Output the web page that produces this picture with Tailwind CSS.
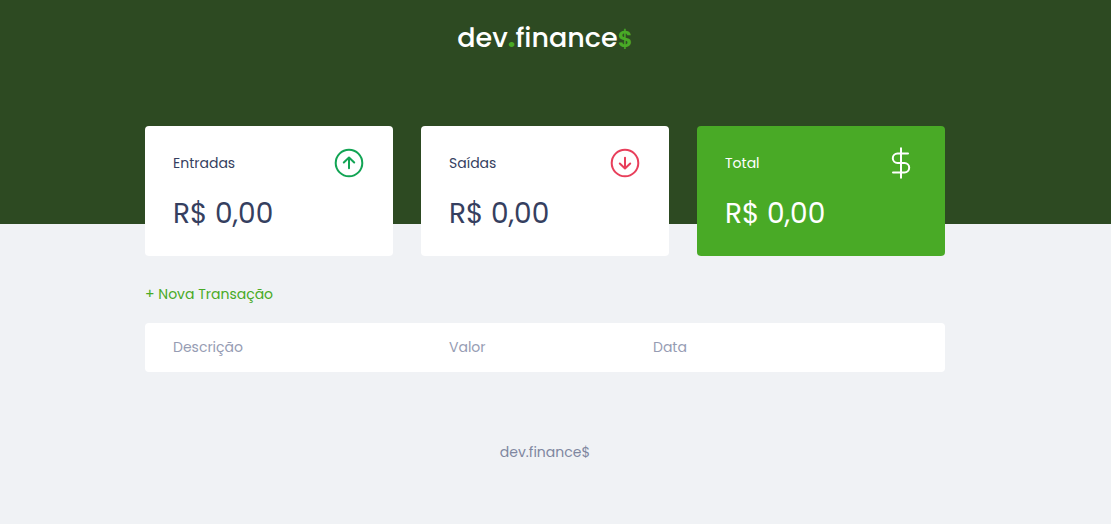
<!DOCTYPE html>
<html lang="pt-BR">
<head>
<meta charset="utf-8">
<meta name="viewport" content="width=device-width, initial-scale=1">
<title>dev.finance$</title>
<script src="https://cdn.jsdelivr.net/npm/@tailwindcss/browser@4"></script>
</head>
<body class="min-h-screen bg-[#f0f2f5] font-[Poppins,Inter,sans-serif] text-sm">
<header class="h-56 bg-[#2d4a22] pt-4 pr-[21px] text-center">
  <h1 class="text-[27px] leading-[44px] font-medium text-white">dev<span class="font-bold text-[#49aa26]">.</span>finance<span class="text-[23px] font-semibold text-[#49aa26]">$</span></h1>
</header>
<main class="pr-[21px]">
  <div class="mx-auto w-[90vw] max-w-[800px]">
    <section class="-mt-[98px] grid grid-cols-3 gap-7" aria-label="Balanço">
      <div class="rounded bg-white px-7 pt-[21px] pb-5 text-[#363f5f]">
        <h2 class="flex h-8 items-center justify-between">Entradas
          <svg class="size-8" viewBox="0 0 32 32" fill="none" stroke="#12a454" stroke-width="2" stroke-linecap="round" stroke-linejoin="round" aria-hidden="true"><circle cx="16" cy="16" r="13.3"/><path d="M16 21.3V10.7M10.8 15.5 16 10.5 21.2 15.5"/></svg>
        </h2>
        <p class="mt-[13px] text-[28px] leading-11">R$ 0,00</p>
      </div>
      <div class="rounded bg-white px-7 pt-[21px] pb-5 text-[#363f5f]">
        <h2 class="flex h-8 items-center justify-between">Saídas
          <svg class="size-8" viewBox="0 0 32 32" fill="none" stroke="#e83f5b" stroke-width="2" stroke-linecap="round" stroke-linejoin="round" aria-hidden="true"><circle cx="16" cy="16" r="13.3"/><path d="M16 10.7V21.3M10.8 16.5 16 21.5 21.2 16.5"/></svg>
        </h2>
        <p class="mt-[13px] text-[28px] leading-11">R$ 0,00</p>
      </div>
      <div class="rounded bg-[#49aa26] px-7 pt-[21px] pb-5 text-white">
        <h2 class="flex h-8 items-center justify-between">Total
          <svg class="size-8" viewBox="0 0 32 32" fill="none" stroke="#fff" stroke-width="2" stroke-linecap="round" stroke-linejoin="round" aria-hidden="true"><path d="M16 1.3V30.7M23 6.6H12.5A4.7 4.7 0 0 0 12.5 16H19.5A4.7 4.7 0 0 1 19.5 25.4H8"/></svg>
        </h2>
        <p class="mt-[13px] text-[28px] leading-11">R$ 0,00</p>
      </div>
    </section>
    <section class="mt-7" aria-label="Transações">
      <a href="#nova" class="inline-block text-[#49aa26]">+ Nova Transação</a>
      <table class="mt-[19px] w-full table-fixed overflow-hidden rounded bg-white text-left text-[#969cb3]">
        <thead><tr class="h-[49px]">
          <th class="w-[38%] pb-0.5 pl-7 font-normal" scope="col">Descrição</th>
          <th class="w-[204px] pb-0.5 font-normal" scope="col">Valor</th>
          <th class="pb-0.5 font-normal" scope="col">Data</th>
        </tr></thead>
      </table>
    </section>
  </div>
</main>
<footer class="pt-[70px] pr-[21px] pb-14 text-center text-[#7f87a0]"><p>dev.finance$</p></footer>
</body>
</html>
